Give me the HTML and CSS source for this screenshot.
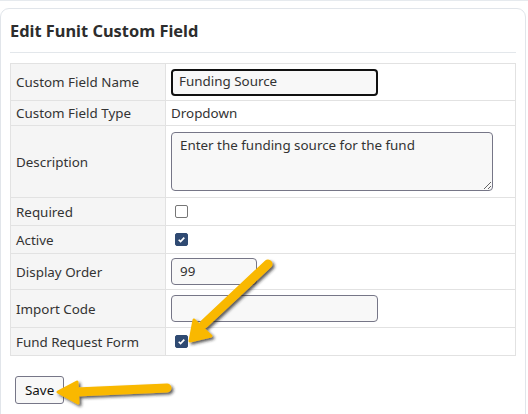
FILE: index.html
```html
<!DOCTYPE html>
<html>
<head>
<meta charset="utf-8">
<link rel="stylesheet" href="styles.css">
</head>
<body>
<div class="topline"></div>
<div class="card">
  <h2 class="title">Edit Funit Custom Field</h2>
  <table class="form">
    <tr class="r-name">
      <th>Custom Field Name</th>
      <td><input class="inp inp-name" type="text" value="Funding Source"></td>
    </tr>
    <tr class="r-type">
      <th>Custom Field Type</th>
      <td>Dropdown</td>
    </tr>
    <tr class="r-desc">
      <th>Description</th>
      <td><textarea class="ta">Enter the funding source for the fund</textarea></td>
    </tr>
    <tr class="r-chk">
      <th>Required</th>
      <td><span class="cb"></span></td>
    </tr>
    <tr class="r-chk">
      <th>Active</th>
      <td><span class="cb on"><svg viewBox="0 0 13 13"><path d="M3.2 6.8 L5.4 9 L9.8 4.2" /></svg></span></td>
    </tr>
    <tr class="r-order">
      <th>Display Order</th>
      <td><input class="inp inp-order" type="text" value="99"></td>
    </tr>
    <tr class="r-import">
      <th>Import Code</th>
      <td><input class="inp inp-import" type="text" value=""></td>
    </tr>
    <tr class="r-chk">
      <th>Fund Request Form</th>
      <td><span class="cb on"><svg viewBox="0 0 13 13"><path d="M3.2 6.8 L5.4 9 L9.8 4.2" /></svg></span></td>
    </tr>
  </table>
  <button class="save">Save</button>
</div>
<svg class="arrows" width="528" height="414" viewBox="0 0 528 414">
  <defs>
    <filter id="sh" x="-20%" y="-20%" width="140%" height="140%">
      <feDropShadow dx="2" dy="2" stdDeviation="1.5" flood-color="#222" flood-opacity="0.75"/>
    </filter>
  </defs>
  <g filter="url(#sh)" fill="#f9b800" stroke="#f9b800" stroke-linejoin="round" stroke-linecap="round">
    <path d="M268 264 L204 324" stroke-width="9" fill="none"/>
    <path d="M190 341 L194 320 L211 336 Z" stroke-width="3"/>
    <path d="M167 388 L76 392" stroke-width="9" fill="none"/>
    <path d="M58 392 L77 382 L78 403 Z" stroke-width="3"/>
  </g>
</svg>
</body>
</html>
```
FILE: styles.css
```css
html, body {
  margin: 0;
  padding: 0;
  background: #ffffff;
  width: 528px;
  height: 414px;
  overflow: hidden;
  font-family: "Noto Sans", "Open Sans", sans-serif;
  color: #333333;
}
.topline {
  height: 1px;
  background: #e6eaee;
}
.card {
  margin: 7px 2px 0 0;
  border: 1px solid #e1e5ea;
  border-radius: 9px;
  padding: 11px 9px 30px 9px;
  height: 420px;
  box-sizing: border-box;
}
.title {
  margin: 0;
  padding: 0 0 10px 0;
  font-size: 16.4px;
  font-weight: 700;
  color: #2d2d2d;
  line-height: 22px;
  border-bottom: 1px solid #e3e7eb;
}
.form {
  margin-top: 10px;
  width: 506px;
  border-collapse: collapse;
  font-size: 13.4px;
}
.form th, .form td {
  border: 1px solid #e2e2e2;
  text-align: left;
  font-weight: 400;
  padding: 0 5px;
  vertical-align: middle;
  color: #333;
}
.form th {
  width: 144px;
  background: #f5f5f5;
}
.r-name { height: 37px; }
.r-type { height: 25px; }
.r-desc { height: 72px; }
.r-chk { height: 28px; }
.r-order { height: 36px; }
.r-import { height: 38px; }
.inp {
  box-sizing: border-box;
  height: 27px;
  border: 1px solid #767687;
  border-radius: 4px;
  background: #f8f8f8;
  font-family: inherit;
  font-size: 13.4px;
  color: #333;
  padding: 0 8px 2px 8px;
  display: block;
}
.inp-name {
  width: 207px;
  border: 2px solid #111;
  padding-left: 6px;
}
.inp-order { width: 86px; }
.inp-import { width: 207px; }
.ta {
  box-sizing: border-box;
  display: block;
  width: 322px;
  height: 59px;
  border: 1px solid #767687;
  border-radius: 4px;
  background: #f8f8f8;
  font-family: inherit;
  font-size: 13.4px;
  color: #333;
  padding: 3px 8px;
  margin-top: 0;
}
.cb {
  display: block;
  box-sizing: border-box;
  width: 13px;
  height: 13px;
  margin-left: 4px;
  border: 1px solid #767676;
  border-radius: 2px;
  background: #fff;
}
.cb.on {
  background: #2f4a72;
  border-color: #2f4a72;
}
.cb svg {
  display: block;
  width: 11px;
  height: 11px;
}
.cb svg path {
  fill: none;
  stroke: #ffffff;
  stroke-width: 2;
}
.save {
  margin: 20px 0 0 5px;
  height: 28px;
  padding: 0 9px;
  border: 1px solid #767687;
  border-radius: 3px;
  background: #f8f8f8;
  font-family: inherit;
  font-size: 13.4px;
  color: #111;
}
.arrows {
  position: absolute;
  left: 0;
  top: 0;
  pointer-events: none;
}
```
